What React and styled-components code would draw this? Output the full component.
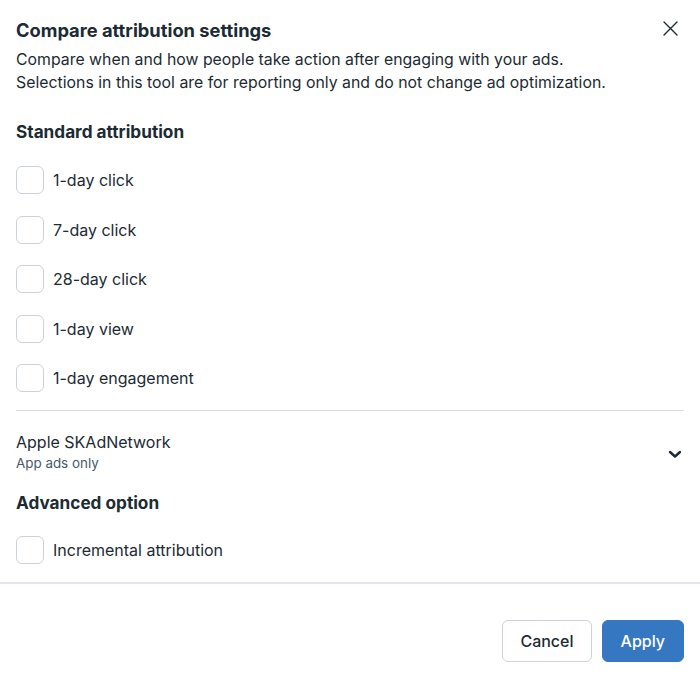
import React from "react";
import styled, { createGlobalStyle } from "styled-components";

const Global = createGlobalStyle`
  html, body { margin: 0; padding: 0; background: #fff; }
  body { font-family: Inter, "Noto Sans", sans-serif; color: #1c2b33; }
  * { box-sizing: border-box; }
`;

const Dialog = styled.div`
  width: 700px;
  height: 687px;
  display: flex;
  flex-direction: column;
  background: #fff;
`;

const Body = styled.div`
  padding: 16px 16px 0 16px;
  display: flex;
  flex-direction: column;
`;

const Header = styled.div`
  display: flex;
  justify-content: space-between;
  align-items: flex-start;
`;

const Title = styled.h1`
  margin: 0;
  font-size: 18.3px;
  line-height: 28px;
  font-weight: 700;
  color: #1c2b33;
`;

const CloseButton = styled.button`
  border: 0;
  background: none;
  padding: 0;
  width: 24px;
  height: 24px;
  margin: 0 2px 0 0;
  display: flex;
  align-items: center;
  justify-content: center;
  color: #1c2b33;
  cursor: pointer;
`;

const Description = styled.p`
  margin: 4px 0 0 0;
  font-size: 15.85px;
  line-height: 23px;
  color: #1c2b33;
`;

const SectionTitle = styled.h2`
  margin: ${p => p.$top}px 0 0 0;
  font-size: 17.2px;
  line-height: 24px;
  font-weight: 700;
  color: #1c2b33;
`;

const List = styled.div`
  display: flex;
  flex-direction: column;
  gap: 21.5px;
  margin-top: ${p => p.$top}px;
`;

const Row = styled.label`
  display: flex;
  align-items: center;
  gap: 9px;
  height: 28px;
  font-size: 16px;
  color: #1c2b33;
  cursor: pointer;
`;

const Box = styled.span`
  width: 28px;
  height: 28px;
  border: 1px solid #cbd2d9;
  border-radius: 6px;
  background: #fff;
  flex-shrink: 0;
`;

const Divider = styled.div`
  height: 1px;
  background: #dadde1;
  margin: ${p => p.$top}px 0 0 0;
`;

const Expander = styled.div`
  display: flex;
  align-items: center;
  justify-content: space-between;
  margin-top: 20px;
`;

const ExpanderText = styled.div`
  display: flex;
  flex-direction: column;
`;

const ExpanderTitle = styled.div`
  font-size: 16px;
  line-height: 22px;
  color: #1c2b33;
`;

const ExpanderSub = styled.div`
  margin-top: 1px;
  font-size: 13.4px;
  line-height: 18px;
  color: #465a69;
`;

const Chevron = styled.span`
  display: flex;
  margin: 4px 2px 0 0;
  color: #1c2b33;
`;

const FullDivider = styled.div`
  height: 2px;
  background: #e4e6eb;
  margin-top: 18px;
`;

const Footer = styled.div`
  display: flex;
  justify-content: flex-end;
  gap: 10px;
  padding: 36px 16px 0 16px;
`;

const Button = styled.button`
  height: 42px;
  padding: 0 ${p => (p.$primary ? 18 : 17)}px;
  border-radius: 6px;
  font-family: inherit;
  font-size: 16px;
  font-weight: 500;
  border: 1px solid ${p => (p.$primary ? "#3578c1" : "#cbd2d9")};
  background: ${p => (p.$primary ? "#3578c1" : "#fff")};
  color: ${p => (p.$primary ? "#fff" : "#1c2b33")};
  cursor: pointer;
`;

const standard = ["1-day click", "7-day click", "28-day click", "1-day view", "1-day engagement"];

export default function App() {
  return (
    <>
      <Global />
      <Dialog>
        <Body>
          <Header>
            <Title>Compare attribution settings</Title>
            <CloseButton aria-label="Close">
              <svg width="15" height="15" viewBox="0 0 15 15" fill="none" stroke="currentColor" strokeWidth="1.4" strokeLinecap="round">
                <path d="M1 1L14 14M14 1L1 14" />
              </svg>
            </CloseButton>
          </Header>
          <Description>
            Compare when and how people take action after engaging with your ads.
            <br />
            Selections in this tool are for reporting only and do not change ad optimization.
          </Description>
          <SectionTitle $top={26}>Standard attribution</SectionTitle>
          <List $top={22}>
            {standard.map(s => (
              <Row key={s}>
                <Box />
                {s}
              </Row>
            ))}
          </List>
          <Divider $top={18} />
          <Expander>
            <ExpanderText>
              <ExpanderTitle>Apple SKAdNetwork</ExpanderTitle>
              <ExpanderSub>App ads only</ExpanderSub>
            </ExpanderText>
            <Chevron>
              <svg width="14" height="10" viewBox="0 0 14 10" fill="none" stroke="currentColor" strokeWidth="2.4" strokeLinecap="round" strokeLinejoin="round">
                <path d="M2 3L7 7.5L12 3" />
              </svg>
            </Chevron>
          </Expander>
          <SectionTitle $top={19}>Advanced option</SectionTitle>
          <List $top={21}>
            <Row>
              <Box />
              Incremental attribution
            </Row>
          </List>
        </Body>
        <FullDivider />
        <Footer>
          <Button>Cancel</Button>
          <Button $primary>Apply</Button>
        </Footer>
      </Dialog>
    </>
  );
}
